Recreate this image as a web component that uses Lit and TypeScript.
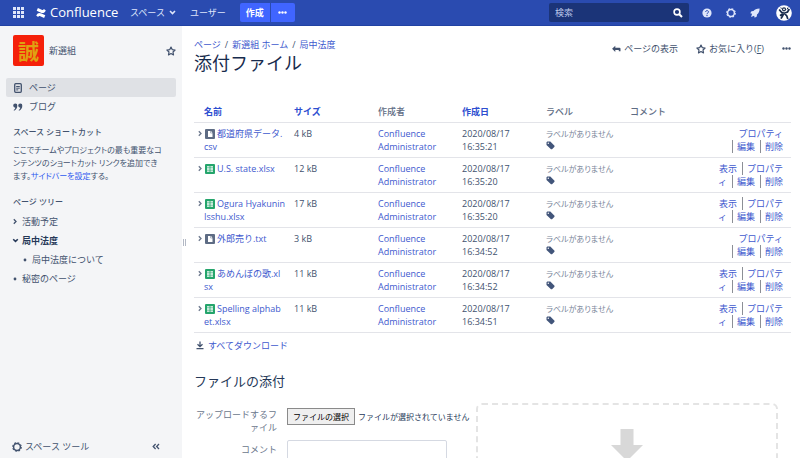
import { LitElement, html, css, svg, nothing } from "lit";
import { customElement, query, state } from "lit/decorators.js";

interface Attachment {
  kind: "doc" | "sheet";
  name: string[];
  size: string;
  time: string;
}

const FILES: Attachment[] = [
  { kind: "doc", name: ["都道府県データ.", "csv"], size: "4 kB", time: "16:35:21" },
  { kind: "sheet", name: ["U.S. state.xlsx"], size: "12 kB", time: "16:35:20" },
  { kind: "sheet", name: ["Ogura Hyakunin", "Isshu.xlsx"], size: "17 kB", time: "16:35:20" },
  { kind: "doc", name: ["外郎売り.txt"], size: "3 kB", time: "16:34:52" },
  { kind: "sheet", name: ["あめんぼの歌.xl", "sx"], size: "11 kB", time: "16:34:52" },
  { kind: "sheet", name: ["Spelling alphab", "et.xlsx"], size: "11 kB", time: "16:34:51" },
];

const icon = (w: number, h: number, body: unknown, cls = "icon") =>
  html`<svg class=${cls} width=${w} height=${h} viewBox="0 0 ${w} ${h}" aria-hidden="true">${body}</svg>`;

const appsIcon = icon(11, 11, svg`<path fill="currentColor" d="M0 0h3v3H0zM4 0h3v3H4zM8 0h3v3H8zM0 4h3v3H0zM4 4h3v3H4zM8 4h3v3H8zM0 8h3v3H0zM4 8h3v3H4zM8 8h3v3H8z"/>`);
const logoIcon = icon(10, 10, svg`<path fill="currentColor" d="M.2 7.500C1.700 4.700 3.200 4.400 5.500 5.500L9.300 7.300 8.100 10 4.300 8.300C3.200 7.800 2.800 7.900 2.100 9zM9.800 2.500C8.300 5.300 6.800 5.600 4.500 4.500L.7 2.700 1.900 0 5.700 1.700C6.800 2.200 7.200 2.100 7.900 1z"/>`);
const caretDown = icon(7, 5, svg`<path d="M1 1l2.500 2.500L6 1" fill="none" stroke="currentColor" stroke-width="1.600"/>`);
const dots = icon(9, 3, svg`<circle cx="1.500" cy="1.500" r="1.200" fill="currentColor"/><circle cx="4.500" cy="1.500" r="1.200" fill="currentColor"/><circle cx="7.500" cy="1.500" r="1.200" fill="currentColor"/>`);
const searchIcon = icon(10, 10, svg`<circle cx="4" cy="4" r="2.900" fill="none" stroke="currentColor" stroke-width="1.600"/><path d="M6.200 6.200L9 9" stroke="currentColor" stroke-width="2"/>`);
const helpIcon = icon(10, 10, svg`<circle cx="5" cy="5" r="4.600" fill="currentColor"/><path d="M3.600 4c0-1.900 2.900-1.800 2.900-.1C6.500 5 5 4.900 5 6.100" fill="none" stroke="#2a4bb0" stroke-width="1"/><circle cx="5" cy="7.500" r=".7" fill="#2a4bb0"/>`);
const gearIcon = icon(10, 10, svg`<circle cx="5" cy="5" r="3.400" fill="none" stroke="currentColor" stroke-width="1.500"/><circle cx="5" cy="5" r="4.300" fill="none" stroke="currentColor" stroke-width="1.100" stroke-dasharray="1.800 1.577"/>`);
const rocketIcon = icon(10, 10, svg`<path fill="currentColor" d="M9.600.4C6.400.4 4.700 1.400 3.500 3L1.500 3.200.2 5.200l1.900.6L1 8.900l3.100-1.100.6 2L6.800 8.500 7 6.400C8.700 5 9.600 3.400 9.600.4z"/>`);
const avatarIcon = icon(16, 16, svg`<circle cx="8" cy="8" r="7.800" fill="#fff"/><circle cx="8" cy="4.300" r="1.500" fill="none" stroke="#172b4d" stroke-width="1.200"/><path d="M3.200 4.500L5.500 7.200l2.700 1L11.500 7l1.800-3M8 8L6.800 10.500 5 13.700M8.500 8.500l2.300 2.500 1 3M4 10.700l2.700-2" fill="none" stroke="#172b4d" stroke-width="1.700"/><path d="M11 4.500l1-2M4.500 2.800l1.300.6" stroke="#172b4d"/>`);
const starIcon = icon(10, 10, svg`<path d="M5 1l1.200 2.600 2.900.4-2.100 2 .5 2.900L5 7.500 2.500 8.900 3 6 .9 4l2.900-.4z" fill="none" stroke="currentColor" stroke-width="1.200" stroke-linejoin="round"/>`);
const pageIcon = icon(10, 10, svg`<rect x="1.700" y=".7" width="6.600" height="8.600" rx="1" fill="none" stroke="currentColor" stroke-width="1.300"/><path d="M3.200 3.500h3.600M3.200 5.200h3.600M3.200 6.900h2" stroke="currentColor"/>`);
const quoteIcon = icon(10, 10, svg`<path fill="currentColor" d="M2.300 1.500a2 2 0 0 1 2 2.200C4.300 6 3 8 1 8.700L.7 7.900c1-.6 1.500-1.400 1.600-2.200a2.100 2.100 0 0 1 0-4.200zM7.300 1.500a2 2 0 0 1 2 2.200C9.300 6 8 8 6 8.700l-.3-.8c1-.6 1.500-1.400 1.600-2.200a2.100 2.100 0 0 1 0-4.200z"/>`);
const chevRight = icon(4, 7, svg`<path d="M.8 1.300L3 3.500.8 5.700" fill="none" stroke="currentColor" stroke-width="1.300"/>`);
const chevDown = icon(7, 5, svg`<path d="M1.200 1.200l2.300 2.200 2.300-2.200" fill="none" stroke="currentColor" stroke-width="1.500"/>`);
const bullet = icon(4, 4, svg`<circle cx="2" cy="2" r="1.400" fill="currentColor"/>`);
const collapseIcon = icon(8, 7, svg`<path d="M3.600 1L1.200 3.500 3.600 6M7 1L4.600 3.500 7 6" fill="none" stroke="currentColor" stroke-width="1.300"/>`);
const backIcon = icon(9, 8, svg`<path fill="currentColor" d="M3.300.8v2h4.200a1 1 0 0 1 1 1v2.500H6.800V5H3.300v1.900L.1 3.800z"/>`);
const docIcon = icon(10, 10, svg`<rect width="10" height="10" rx="1" fill="#5e6c84"/><path fill="#fff" d="M3 2h2.500v2.200H7.500V8H3zM6 2l1.500 1.700H6z"/>`, "file-icon");
const sheetIcon = icon(10, 10, svg`<rect width="10" height="10" rx="1" fill="#25a56c"/><path fill="#fff" d="M2 2.200h2.600v1.400H2zM5.400 2.200H8v1.400H5.400zM2 4.300h2.600v1.400H2zM5.400 4.300H8v1.400H5.400zM2 6.400h2.600v1.400H2zM5.400 6.400H8v1.400H5.400z"/>`, "file-icon");
const tagIcon = icon(9, 9, svg`<path fill="currentColor" fill-rule="evenodd" d="M.5 1.200L1.300.5h3L8.500 4.700v1L6 8.300H5L.5 4zM2.300 1.600a.7.7 0 1 0 0 1.400.7.7 0 0 0 0-1.400z"/>`);
const downloadIcon = icon(8, 9, svg`<path d="M4 .5v4.500M1.500 3.300L4 5.700l2.500-2.400M.5 7.700h7" fill="none" stroke="currentColor" stroke-width="1.300"/>`);
const bigArrow = icon(32, 32, svg`<path fill="#d8d8d8" d="M9.500 0h13v16H32L16 32 0 16h9.500z"/>`);

const base = css`
  :host {
    font: 9px/13px "Open Sans", "Noto Sans CJK JP", sans-serif;
    color: #42526e;
  }
  * { box-sizing: border-box; }
  a { color: #4059ce; text-decoration: none; }
  a:hover { text-decoration: underline; }
  button {
    font: inherit;
    color: inherit;
    background: none;
    border: 0;
    padding: 0;
    cursor: pointer;
    display: inline-flex;
    align-items: center;
    justify-content: center;
  }
  input { font: inherit; color: inherit; }
  svg { flex: none; }
`;

@customElement("top-bar")
export class TopBar extends LitElement {
  static styles = [base, css`
    :host {
      display: flex;
      align-items: center;
      height: 26px;
      padding: 0 8px 0 13px;
      background: #2a4bb0;
      border-bottom: 1px solid #2142a3;
      color: #dfe6fb;
    }
    .apps { margin-right: 12px; }
    .brand { display: flex; align-items: center; gap: 4px; width: 81px; color: #fff; font-size: 13px; margin-right: 13px; }
    .brand:hover { text-decoration: none; }
    .menu { gap: 4px; margin-right: 14px; }
    .create { display: flex; gap: 1px; flex: none; color: #fff; font-weight: 700; }
    .create button { height: 19px; background: #4065ff; }
    .make { width: 30px; border-radius: 2px 0 0 2px; }
    .more { width: 24px; border-radius: 0 2px 2px 0; }
    .search {
      display: flex;
      align-items: center;
      width: 140px;
      height: 19px;
      margin-left: auto;
      padding: 0 6px;
      border-radius: 2px;
      background: #1b3478;
      color: #fff;
    }
    .search input { flex: 1; min-width: 0; padding: 0; border: 0; outline: 0; background: none; }
    .search input::placeholder { color: #bcc8ea; }
    .tools { display: flex; align-items: center; gap: 14px; margin: 0 16px 0 13px; }
  `];
  render() {
    return html`
      <button class="apps" aria-label="アプリケーション">${appsIcon}</button>
      <a class="brand" href="#">${logoIcon}<span>Confluence</span></a>
      <button class="menu">スペース ${caretDown}</button>
      <button class="menu">ユーザー</button>
      <div class="create">
        <button class="make">作成</button>
        <button class="more" aria-label="その他">${dots}</button>
      </div>
      <form class="search" role="search">
        <input type="text" placeholder="検索" aria-label="検索" />
        <button type="button" aria-label="検索する">${searchIcon}</button>
      </form>
      <div class="tools">
        <button aria-label="ヘルプ">${helpIcon}</button>
        <button aria-label="管理">${gearIcon}</button>
        <button aria-label="通知">${rocketIcon}</button>
      </div>
      <button aria-label="プロフィール">${avatarIcon}</button>
    `;
  }
}

@customElement("space-sidebar")
export class SpaceSidebar extends LitElement {
  static styles = [base, css`
    :host {
      display: flex;
      flex-direction: column;
      background: #f4f5f7;
      padding: 9px 6px 5px;
      min-height: 0;
    }
    .space { display: flex; align-items: center; gap: 5px; padding: 0 0 0 7px; }
    .space a { flex: 1; color: inherit; }
    .seal {
      display: flex;
      align-items: center;
      justify-content: center;
      width: 31px;
      height: 31px;
      border-radius: 2px;
      background: #f5200a;
      color: #dfa112;
      font: 700 21px/31px "Noto Sans CJK JP", sans-serif;
    }
    nav { display: flex; flex-direction: column; margin-top: 12px; }
    nav a { display: flex; align-items: center; gap: 6px; height: 19px; padding: 0 7px; border-radius: 2px; color: inherit; }
    nav .on { background: #dfe1e5; }
    h2 { margin: 9px 7px 0; font-size: 8px; line-height: 13px; font-weight: 500; }
    p { margin: 5px 10px 0 7px; font-size: 8px; line-height: 13px; font-feature-settings: "palt"; }
    p a { color: #2f5bf0; }
    .tree-title { margin-top: 13px; }
    ul { list-style: none; margin: 0; padding: 0; }
    .tree { margin-top: 4px; padding-left: 5px; }
    .tree ul { padding-left: 10px; }
    .node { display: flex; align-items: center; height: 19px; color: inherit; gap: 3px; }
    .mark { display: flex; width: 8px; justify-content: center; }
    .current { font-weight: 600; color: #253858; }
    footer { display: flex; align-items: center; justify-content: space-between; margin-top: auto; padding: 0 16px 0 6px; }
    footer button { gap: 3px; }
  `];
  render() {
    return html`
      <div class="space"><span class="seal" aria-hidden="true">誠</span><a href="#">新選組</a><button aria-label="お気に入り">${starIcon}</button></div>
      <nav>
        <a class="on" href="#">${pageIcon}ページ</a>
        <a href="#">${quoteIcon}ブログ</a>
      </nav>
      <h2>スペース ショートカット</h2>
      <p>ここでチームやプロジェクトの最も重要なコ<br />ンテンツのショートカット リンクを追加でき<br />ます。<a href="#">サイドバーを設定</a>する。</p>
      <h2 class="tree-title">ページ ツリー</h2>
      <ul class="tree">
        <li><a class="node" href="#"><span class="mark">${chevRight}</span>活動予定</a></li>
        <li>
          <a class="node current" href="#"><span class="mark">${chevDown}</span>局中法度</a>
          <ul><li><a class="node" href="#"><span class="mark">${bullet}</span>局中法度について</a></li></ul>
        </li>
        <li><a class="node" href="#"><span class="mark">${bullet}</span>秘密のページ</a></li>
      </ul>
      <footer>
        <button>${gearIcon}スペース ツール</button>
        <button aria-label="サイドバーを折りたたむ">${collapseIcon}</button>
      </footer>
    `;
  }
}

@customElement("attachment-table")
export class AttachmentTable extends LitElement {
  static styles = [base, css`
    :host { display: block; }
    table { width: 100%; border-collapse: collapse; table-layout: fixed; }
    .c-name { width: 94px; }
    .c-mid { width: 84px; }
    th, td { padding: 4px 0 4px 6px; text-align: left; vertical-align: top; border-bottom: 1px solid #e3e4e9; }
    tr > :first-child { padding-left: 10px; }
    th { font-weight: 500; color: #5e6c84; }
    th a { font-weight: 700; color: #2d4ed0; }
    td { height: 35px; white-space: nowrap; }
    .first { display: flex; align-items: center; margin-left: -6px; color: #6b778c; }
    .first svg { margin-right: 3px; }
    .first .file-icon { margin-right: 2px; }
    .none { font-size: 8px; color: #7a869a; font-feature-settings: "palt"; }
    .label { display: flex; flex-direction: column; align-items: flex-start; gap: 1px; }
    .label button { color: #42557a; }
    .acts { padding-right: 8px; text-align: right; }
    .acts a + a, .sep { border-left: 1px solid #8c8f96; margin-left: 5px; padding-left: 4px; }
  `];
  render() {
    return html`
      <table>
        <colgroup><col class="c-name" /><col class="c-mid" /><col class="c-mid" /><col class="c-mid" /><col class="c-mid" /><col class="c-mid" /><col /></colgroup>
        <thead>
          <tr>
            <th><a href="#">名前</a></th><th><a href="#">サイズ</a></th><th>作成者</th>
            <th><a href="#">作成日</a></th><th>ラベル</th><th>コメント</th><th></th>
          </tr>
        </thead>
        <tbody>
          ${FILES.map((f) => html`
            <tr>
              <td>
                <span class="first">${chevRight}${f.kind === "doc" ? docIcon : sheetIcon}<a href="#">${f.name[0]}</a></span>
                ${f.name[1] ? html`<a href="#">${f.name[1]}</a>` : nothing}
              </td>
              <td>${f.size}</td>
              <td><a href="#">Confluence<br />Administrator</a></td>
              <td>2020/08/17<br />${f.time}</td>
              <td><div class="label"><span class="none">ラベルがありません</span><button aria-label="ラベルを編集">${tagIcon}</button></div></td>
              <td></td>
              <td class="acts">${f.kind === "sheet"
                ? html`<a href="#">表示</a><a href="#">プロパテ<br />ィ</a>`
                : html`<a href="#">プロパティ</a><br />`}<a class="sep" href="#">編集</a><a href="#">削除</a></td>
            </tr>`)}
        </tbody>
      </table>
    `;
  }
}

@customElement("upload-form")
export class UploadForm extends LitElement {
  @state() private chosen = "ファイルが選択されていません";
  @query("#file") private file!: HTMLInputElement;

  static styles = [base, css`
    :host { display: flex; }
    form { display: grid; grid-template-columns: 83px 189px; column-gap: 10px; row-gap: 6px; align-content: start; padding-top: 5px; }
    label { text-align: right; color: #6b778c; }
    .picker { display: flex; align-items: flex-start; gap: 3px; font-size: 8px; white-space: nowrap; color: #253858; }
    .picker button { height: 17px; padding: 0 5px; border: 1px solid #8a8a8a; background: #efefef; color: #000; }
    .picker span { line-height: 17px; }
    .comment { width: 160px; height: 20px; border: 1px solid #d5d9e2; border-radius: 2px; background: #fff; }
    .comment-label { line-height: 20px; }
    .drop { flex: 1; display: flex; justify-content: center; height: 84px; margin-right: 13px; padding-top: 24px; border: 2px dashed #e4e4e4; border-radius: 6px; }
  `];
  private pick() {
    this.file.click();
  }
  private changed() {
    this.chosen = this.file.files?.[0]?.name ?? this.chosen;
  }
  render() {
    return html`
      <form>
        <label for="file">アップロードするファイル</label>
        <div class="picker">
          <input id="file" type="file" hidden @change=${this.changed} />
          <button type="button" @click=${this.pick}>ファイルの選択</button><span>${this.chosen}</span>
        </div>
        <label class="comment-label" for="comment">コメント</label>
        <input class="comment" id="comment" type="text" />
      </form>
      <div class="drop">${bigArrow}</div>
    `;
  }
}

@customElement("app-root")
export class AppRoot extends LitElement {
  static styles = [base, css`
    :host { display: flex; flex-direction: column; height: 100vh; background: #fff; }
    .body { flex: 1; min-height: 0; display: grid; grid-template-columns: 182px 5px 1fr; }
    .splitter { display: flex; align-items: center; justify-content: center; gap: 1px; }
    .splitter i { width: 1px; height: 7px; background: #b3b9c5; }
    main { min-width: 0; overflow-y: auto; scrollbar-width: none; padding: 12px 9px 0 7px; }
    .top { display: flex; justify-content: space-between; align-items: flex-start; }
    .crumbs { display: flex; gap: 4px; }
    h1 { margin: 0; font-size: 18px; line-height: 24px; font-weight: 400; color: #172b4d; }
    .actions { display: flex; gap: 18px; margin-top: 4px; }
    .actions button { gap: 3px; }
    attachment-table { margin-top: 26px; }
    .all { display: flex; align-items: center; gap: 4px; margin: 6px 0 0 2px; color: #42526e; }
    h2 { margin: 19px 0 12px; font-size: 13px; line-height: 20px; font-weight: 400; color: #253858; }
  `];
  render() {
    return html`
      <top-bar></top-bar>
      <div class="body">
        <space-sidebar></space-sidebar>
        <div class="splitter"><i></i><i></i></div>
        <main>
          <div class="top">
            <div>
              <div class="crumbs"><a href="#">ページ</a>/<a href="#">新選組 ホーム</a>/<a href="#">局中法度</a></div>
              <h1>添付ファイル</h1>
            </div>
            <div class="actions">
              <button>${backIcon}ページの表示</button>
              <button>${starIcon}<span>お気に入り(<u>F</u>)</span></button>
              <button aria-label="その他">${dots}</button>
            </div>
          </div>
          <attachment-table></attachment-table>
          <div class="all">${downloadIcon}<a href="#">すべてダウンロード</a></div>
          <h2>ファイルの添付</h2>
          <upload-form></upload-form>
        </main>
      </div>
    `;
  }
}
